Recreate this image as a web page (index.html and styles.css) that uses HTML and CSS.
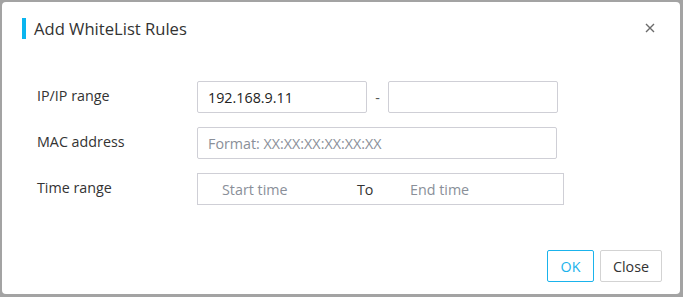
FILE: index.html
```html
<!DOCTYPE html>
<html lang="en">

<head>
    <meta charset="utf-8">
    <meta name="viewport" content="width=device-width, initial-scale=1.0">
    <title>Add WhiteList Rules</title>

    <link rel="stylesheet" href="styles.css">

</head>

<body>

    <div class="dialog">
        <header class="dialog_head">
            <h1 class="dialog_title">Add WhiteList Rules</h1>
            <button class="luk" aria-label="close">
                <svg width="10" height="10" viewBox="0 0 10 10">
                    <path d="M1 1 L9 9 M9 1 L1 9" stroke="#6b6b6b" stroke-width="1.4" fill="none"/>
                </svg>
            </button>
        </header>

        <section class="dialog_form">
            <label class="form_label">IP/IP range</label>
            <div class="form_field ip_range">
                <input class="felt felt_ip" type="text" value="192.168.9.11">
                <span class="streg">-</span>
                <input class="felt felt_ip" type="text" value="">
            </div>

            <label class="form_label">MAC address</label>
            <div class="form_field">
                <input class="felt felt_mac" type="text" placeholder="Format: XX:XX:XX:XX:XX:XX">
            </div>

            <label class="form_label">Time range</label>
            <div class="form_field">
                <div class="felt tid">
                    <span class="tid_start">Start time</span>
                    <span class="tid_to">To</span>
                    <span class="tid_slut">End time</span>
                </div>
            </div>
        </section>

        <footer class="dialog_foot">
            <button class="knap knap_ok">OK</button>
            <button class="knap knap_luk">Close</button>
        </footer>
    </div>

</body>

</html>
```

FILE: styles.css
```css
body {
    margin: 0;
    background-color: #a3a3a3;
    font-family: "Open Sans", "Noto Sans", sans-serif;
    color: #222;
}

.dialog {
    box-sizing: border-box;
    width: 678px;
    height: 292px;
    margin: 2px 0 0 2px;
    background-color: #fff;
    border-radius: 4px;
    display: flex;
    flex-direction: column;
}

.dialog_head {
    display: flex;
    align-items: center;
    justify-content: space-between;
    height: 52px;
    padding: 0 24px 0 20px;
}

.dialog_title {
    margin: 0;
    font-size: 16.6px;
    font-weight: normal;
    color: #333;
    border-left: 4px solid #0bb5ef;
    padding-left: 8px;
    line-height: 21px;
}

.luk {
    background: none;
    border: none;
    padding: 0;
    width: 12px;
    height: 12px;
    display: flex;
    align-items: center;
    justify-content: center;
}

.dialog_form {
    display: grid;
    grid-template-columns: 160px 1fr;
    row-gap: 14px;
    margin: 27px 0 0 35px;
    font-size: 14.3px;
}

.form_label {
    display: flex;
    align-items: center;
    box-sizing: border-box;
    height: 32px;
    padding-bottom: 3px;
    color: #333;
}

.form_field {
    display: flex;
    align-items: center;
}

.felt {
    box-sizing: border-box;
    height: 32px;
    border: 1px solid #cfcfd6;
    border-radius: 2px;
    font-family: inherit;
    font-size: 14.3px;
    color: #222;
    padding: 0 10px;
    outline: none;
}

.felt::placeholder {
    color: #8a8f99;
}

.felt_ip {
    width: 170px;
}

.streg {
    width: 21px;
    text-align: center;
    color: #555;
}

.felt_mac {
    width: 360px;
}

.tid {
    width: 367px;
    display: flex;
    align-items: center;
    padding-left: 24px;
    border-radius: 0;
    color: #8a8f99;
}

.tid_start {
    width: 135px;
}

.tid_to {
    width: 53px;
    color: #333;
}

.dialog_foot {
    margin-top: auto;
    display: flex;
    justify-content: flex-end;
    gap: 6px;
    padding: 0 18px 12px 0;
}

.knap {
    height: 32px;
    background-color: #fff;
    border: 1px solid #d3d3d3;
    border-radius: 2px;
    padding: 0;
    font-family: inherit;
    font-size: 14.3px;
    color: #333;
}

.knap_ok {
    border-color: #1ab3ec;
    color: #1ab3ec;
    width: 47px;
}

.knap_luk {
    width: 62px;
}
```
